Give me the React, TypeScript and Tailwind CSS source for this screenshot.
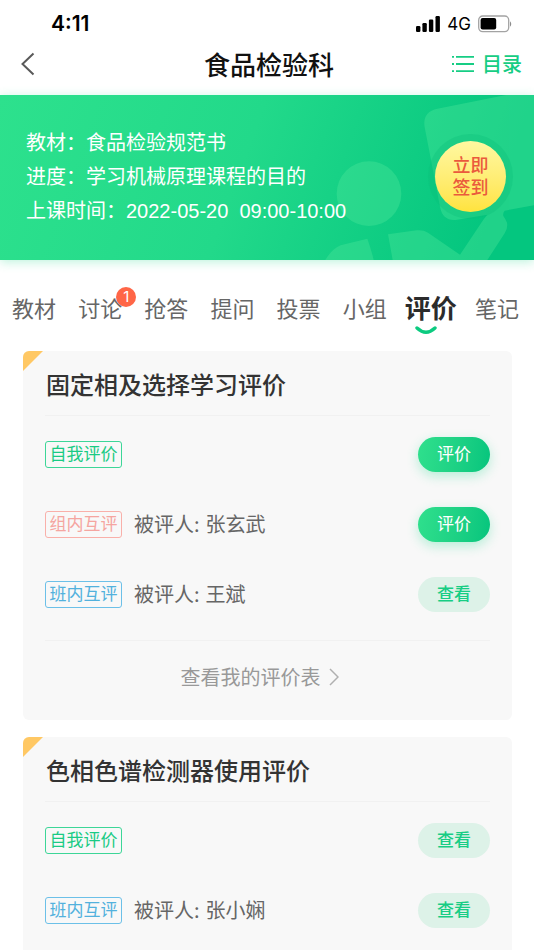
import clsx from "clsx";

type BadgeKind = "self" | "group" | "class";

interface ReviewRow {
  kind: BadgeKind;
  target?: string;
  done: boolean;
}

interface Review {
  title: string;
  rows: ReviewRow[];
  hasSheet: boolean;
}

const tabs = [
  { name: "教材" },
  { name: "讨论", count: 1 },
  { name: "抢答" },
  { name: "提问" },
  { name: "投票" },
  { name: "小组" },
  { name: "评价", active: true },
  { name: "笔记" },
];

const reviews: Review[] = [
  {
    title: "固定相及选择学习评价",
    rows: [
      { kind: "self", done: false },
      { kind: "group", target: "张玄武", done: false },
      { kind: "class", target: "王斌", done: true },
    ],
    hasSheet: true,
  },
  {
    title: "色相色谱检测器使用评价",
    rows: [
      { kind: "self", done: true },
      { kind: "class", target: "张小娴", done: true },
    ],
    hasSheet: false,
  },
];

const badges = {
  self: { label: "自我评价", style: "border-[#3dd698] text-[#19cb84]" },
  group: { label: "组内互评", style: "border-[#f9b0aa] text-[#f5a5a0]" },
  class: { label: "班内互评", style: "border-[#6cc0e8] text-[#52b1dd]" },
};

function StatusBar() {
  return (
    <div className="flex h-10 items-center justify-between pt-2 pl-[51px] pr-[22px] font-['Inter','Liberation_Sans',sans-serif] text-black">
      <span className="text-[21px] leading-6 font-semibold">4:11</span>
      <div className="flex items-center">
        <svg width="24" height="16" viewBox="0 0 24 16" fill="currentColor">
          <rect x="0" y="10" width="4.4" height="6" rx="1.2" />
          <rect x="6.4" y="7" width="4.4" height="9" rx="1.2" />
          <rect x="12.9" y="3.5" width="4.4" height="12.5" rx="1.2" />
          <rect x="19.5" y="0" width="4.4" height="16" rx="1.2" />
        </svg>
        <span className="ml-[7px] text-[17px] leading-6">4G</span>
        <svg className="ml-[7px]" width="34" height="18" viewBox="0 0 34 18">
          <rect x="0.7" y="1" width="30" height="15.6" rx="4" fill="none" stroke="#a3a3a3" strokeWidth="1.3" />
          <rect x="2.6" y="3" width="15.6" height="11.6" rx="2" fill="#000" />
          <path d="M32 6.5v5c1.6-.6 1.6-4.400 0-5z" fill="#8c8c8c" />
        </svg>
      </div>
    </div>
  );
}

function Header() {
  return (
    <header className="grid h-12 grid-cols-[1fr_auto_1fr] items-center pl-4 pr-3">
      <button type="button" aria-label="返回" className="justify-self-start px-1">
        <svg width="15" height="24" viewBox="0 0 15 24" fill="none" stroke="#595959" strokeWidth="2">
          <path d="M13.500 1.500L2.500 12l11 10.500" />
        </svg>
      </button>
      <h1 className="text-[26px] leading-9 font-medium text-[#111]">食品检验科</h1>
      <button
        type="button"
        className="flex items-center gap-2 justify-self-end text-[20px] leading-8 font-medium text-[#16cd84]"
      >
        <svg width="22" height="18" viewBox="0 0 22 18" stroke="currentColor" strokeWidth="1.8">
          <path d="M0 1.800h2M4 1.800h18M0 9h2M4 9h18M0 16.200h2M4 16.200h18" />
        </svg>
        目录
      </button>
    </header>
  );
}

function CourseBanner() {
  return (
    <section className="relative flex h-[165px] items-center justify-between bg-[linear-gradient(110deg,#2de18d_0%,#22d98a_45%,#04c67f_90%)] pb-0.5 pl-[26px] pr-7 shadow-[0_2px_10px_rgba(30,214,138,0.3)]">
      <svg className="absolute top-0 right-0" width="234" height="165" viewBox="0 15 702 495">
        <g fill="#4be69a" opacity="0.4">
          <circle cx="207" cy="311" r="97" />
          <path d="M702 15H618L412 56Q366 66 374 112L420 350Q428 395 472 389L562 374Q550 388 544 398L480 494L384 428Q370 419 350 421L264 433L278 510H562L614 430Q624 415 621 398Q616 386 610 378Q608 368 614 362L702 346Z" />
          <path d="M76 510Q96 476 122 466L202 446Q214 480 221 510Z" />
        </g>
      </svg>
      <div className="relative text-[20px] leading-[34px] text-white">
        <p>教材：食品检验规范书</p>
        <p>进度：学习机械原理课程的目的</p>
        <p>
          上课时间：
          <span className="font-['Liberation_Sans',sans-serif]">2022-05-20&nbsp; 09:00-10:00</span>
        </p>
      </div>
      <button
        type="button"
        className="relative size-[71px] shrink-0 rounded-full bg-linear-to-b from-[#fff8a0] to-[#ffe33c] pb-1 text-[18px] leading-[22px] font-medium text-[#ea5a3c] shadow-[0_0_0_7px_rgba(10,190,120,0.3)]"
      >
        <span className="block">立即</span>
        <span className="block">签到</span>
      </button>
    </section>
  );
}

function Tabs() {
  return (
    <nav className="grid h-[91px] grid-cols-8 items-center pt-[3px] pl-px pr-1">
      {tabs.map((tab) => (
        <a
          key={tab.name}
          href="#"
          className={clsx(
            "relative justify-self-center leading-10 whitespace-nowrap",
            tab.active ? "text-[26px] font-bold text-[#2b2b2b]" : "text-[22px] text-[#666]"
          )}
        >
          {tab.name}
          {tab.count && (
            <span className="absolute top-0 -right-3.5 flex size-5 items-center justify-center rounded-full bg-[#ff6647] font-['Inter',sans-serif] text-[15px] leading-5 text-white">
              {tab.count}
            </span>
          )}
          {tab.active && (
            <svg className="absolute -bottom-2 left-2.5" width="22" height="9" viewBox="0 0 22 9" fill="none">
              <path d="M2 2Q11 10.500 20 2" stroke="#0ccb80" strokeWidth="3.400" strokeLinecap="round" />
            </svg>
          )}
        </a>
      ))}
    </nav>
  );
}

function Row({ row }: { row: ReviewRow }) {
  const badge = badges[row.kind];

  return (
    <li className="flex h-[70px] items-center gap-3">
      <span
        className={clsx(
          "flex h-[27px] w-[77px] items-center justify-center rounded-[3px] border pb-0.5 text-[17px] leading-6",
          badge.style
        )}
      >
        {badge.label}
      </span>
      {row.target && (
        <p className="flex gap-1.5 text-[20px] leading-8 text-[#666]">
          <span>被评人:</span>
          <span>{row.target}</span>
        </p>
      )}
      <button
        type="button"
        className={clsx(
          "ml-auto h-[35px] w-[72px] rounded-full pb-0.5 text-[17px] leading-6",
          row.done
            ? "bg-[#ddf2e8] font-medium text-[#17cd84]"
            : "bg-linear-100 from-[#2fe08d] to-[#04c57d] text-white shadow-[0_4px_12px_rgba(30,214,138,0.3)]"
        )}
      >
        {row.done ? "查看" : "评价"}
      </button>
    </li>
  );
}

function ReviewCard({ review }: { review: Review }) {
  return (
    <article className="relative overflow-hidden rounded-[6px] bg-[#f8f8f8] px-[22px]">
      <span className="absolute top-0 left-0 size-5 bg-[#ffc864] [clip-path:polygon(0_0,100%_0,0_100%)]" />
      <h2 className="border-b border-[#f1f1f1] pt-[3px] pb-px pl-px text-[24px] leading-[60px] font-medium text-[#333]">
        {review.title}
      </h2>
      <ul className="pt-[3px] pb-[11px]">
        {review.rows.map((row) => (
          <Row key={row.kind} row={row} />
        ))}
      </ul>
      {review.hasSheet ? (
        <div className="flex h-20 items-center justify-center border-t border-[#f1f1f1] pr-4 pb-2">
          <a href="#" className="flex items-center gap-2 text-[20px] leading-8 text-[#999]">
            查看我的评价表
            <svg width="10" height="18" viewBox="0 0 10 18" fill="none" stroke="#b0b0b0" strokeWidth="1.500">
              <path d="M1 1l8 8-8 8" />
            </svg>
          </a>
        </div>
      ) : (
        <div className="h-4" />
      )}
    </article>
  );
}

export default function App() {
  return (
    <div className="h-screen overflow-hidden bg-white font-['Noto_Sans_CJK_SC',sans-serif]">
      <div className="pb-[7px]">
        <StatusBar />
        <Header />
      </div>
      <CourseBanner />
      <Tabs />
      <main className="flex flex-col gap-[17px] pl-[23px] pr-[22px]">
        {reviews.map((review) => (
          <ReviewCard key={review.title} review={review} />
        ))}
      </main>
    </div>
  );
}
